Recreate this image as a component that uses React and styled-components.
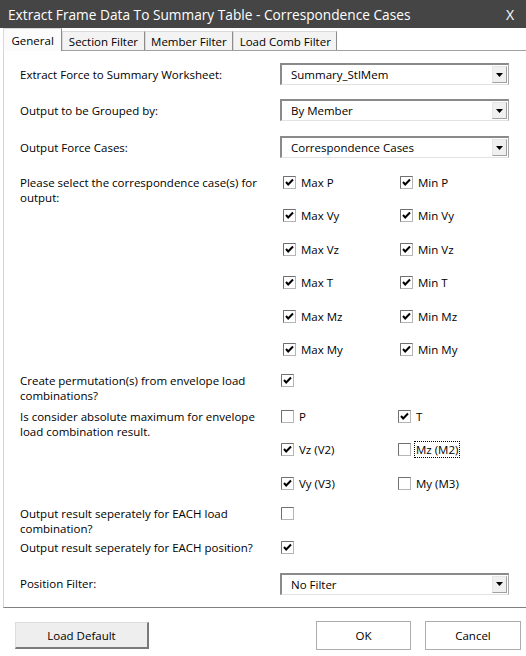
import React from 'react';
import styled, { createGlobalStyle } from 'styled-components';

const GlobalStyle = createGlobalStyle`
  html, body {
    margin: 0;
    padding: 0;
    background: #ffffff;
  }
  body {
    font-family: "Open Sans", "Noto Sans", sans-serif;
  }
`;

const S = {
  Window: styled.div`
    display: flex;
    flex-direction: column;
    width: 526px;
    height: 656px;
    overflow: hidden;
    background: #ffffff;
    color: #000;
    font-size: 11.5px;
  `,
  TitleBar: styled.div`
    display: flex;
    justify-content: space-between;
    align-items: center;
    height: 28px;
    padding: 0 12px 0 8px;
    background: #454545;
    color: #ffffff;
    font-size: 13.7px;
    flex-shrink: 0;
  `,
  Close: styled.span`
    font-size: 14px;
  `,
  TabStrip: styled.div`
    display: flex;
    align-items: flex-end;
    height: 22px;
    padding-left: 3px;
    flex-shrink: 0;
  `,
  Tab: styled.div`
    display: flex;
    align-items: center;
    height: ${({ $active }) => ($active ? '22px' : '18px')};
    margin-bottom: ${({ $active }) => ($active ? '-1px' : '0')};
    padding: 0 ${({ $active }) => ($active ? '7.5px' : '5.5px')};
    border: 1px solid #d9d9d9;
    border-bottom: none;
    border-right: 1px solid #8c8c8c;
    background: ${({ $active }) => ($active ? '#fbfbfb' : '#f3f3f3')};
    font-size: 11.5px;
    position: relative;
    z-index: ${({ $active }) => ($active ? 1 : 0)};
  `,
  Panel: styled.div`
    display: flex;
    flex-direction: column;
    height: 556px;
    margin-left: 3px;
    padding-left: 16px;
    border-top: 1px solid #a0a0a0;
    border-left: 1px solid #d4d4d4;
    border-bottom: 1px solid #808080;
    flex-shrink: 0;
  `,
  Row: styled.div`
    display: grid;
    grid-template-columns: 260px 229px;
    align-items: ${({ $top }) => ($top ? 'start' : 'center')};
    margin-top: ${({ $mt }) => $mt}px;
  `,
  Label: styled.div`
    line-height: 15px;
    padding-right: 6px;
  `,
  Select: styled.div`
    display: flex;
    align-items: center;
    justify-content: space-between;
    height: 22px;
    box-sizing: border-box;
    border-top: 2px solid #8a8a8a;
    border-left: 2px solid #8a8a8a;
    border-right: 1px solid #a8a8a8;
    border-bottom: 1px solid #e2e2e2;
    background: #ffffff;
    padding-left: 9px;
  `,
  Arrow: styled.div`
    display: flex;
    align-items: center;
    justify-content: center;
    width: 15px;
    height: 17px;
    margin-right: 1px;
    box-sizing: border-box;
    border: 1px solid #a0a0a0;
    border-top-color: #e6e6e6;
    border-left-color: #e6e6e6;
    background: #f0f0f0;
  `,
  CheckGrid: styled.div`
    display: grid;
    grid-template-columns: 117px 112px;
    row-gap: ${({ $gap }) => $gap}px;
    padding-left: ${({ $pad }) => $pad}px;
  `,
  Check: styled.div`
    display: flex;
    align-items: center;
    gap: 4px;
    height: 15px;
    padding-left: ${({ $pad }) => $pad || 0}px;
  `,
  CheckText: styled.span`
    padding: 0 1px;
    outline: ${({ $focus }) => ($focus ? '1px dotted #000' : 'none')};
    line-height: 15px;
  `,
  Footer: styled.div`
    display: flex;
    align-items: center;
    padding: 7px 5px 0 15px;
    flex: 1;
  `,
  Button: styled.div`
    display: flex;
    align-items: center;
    justify-content: center;
    box-sizing: border-box;
    width: ${({ $w }) => $w}px;
    height: ${({ $h }) => $h}px;
    margin-left: ${({ $ml }) => $ml || 0}px;
    background: ${({ $raised }) => ($raised ? '#eeeeee' : '#ffffff')};
    border: 1px solid ${({ $raised }) => ($raised ? '#dcdcdc' : '#adadad')};
    border-right: ${({ $raised }) => ($raised ? '2px solid #7a7a7a' : '1px solid #adadad')};
    border-bottom: ${({ $raised }) => ($raised ? '2px solid #7a7a7a' : '1px solid #adadad')};
    font-size: 11.5px;
  `,
};

const CheckBox = ({ checked }) => (
  <svg width="13" height="13" viewBox="0 0 13 13">
    <rect x="0.5" y="0.5" width="12" height="12" fill="#fff" stroke="#b5b5b5" />
    <path d="M0.5 12.5V0.5H12.5" fill="none" stroke="#707070" />
    {checked && (
      <polyline points="3,6 5.2,8.5 10,3.5" fill="none" stroke="#000" strokeWidth="2" />
    )}
  </svg>
);

const Check = ({ checked, label, focus, pad }) => (
  <S.Check $pad={pad}>
    <CheckBox checked={checked} />
    {label && <S.CheckText $focus={focus}>{label}</S.CheckText>}
  </S.Check>
);

const Select = ({ value }) => (
  <S.Select>
    <span>{value}</span>
    <S.Arrow>
      <svg width="7" height="4" viewBox="0 0 7 4">
        <polygon points="0,0 7,0 3.5,4" fill="#000" />
      </svg>
    </S.Arrow>
  </S.Select>
);

const cases = [
  ['Max P', 'Min P'],
  ['Max Vy', 'Min Vy'],
  ['Max Vz', 'Min Vz'],
  ['Max T', 'Min T'],
  ['Max Mz', 'Min Mz'],
  ['Max My', 'Min My'],
];

const App = () => (
  <>
    <GlobalStyle />
    <S.Window>
      <S.TitleBar>
        <span>Extract Frame Data To Summary Table - Correspondence Cases</span>
        <S.Close>X</S.Close>
      </S.TitleBar>
      <S.TabStrip>
        <S.Tab $active>General</S.Tab>
        <S.Tab>Section Filter</S.Tab>
        <S.Tab>Member Filter</S.Tab>
        <S.Tab>Load Comb Filter</S.Tab>
      </S.TabStrip>
      <S.Panel>
        <S.Row $mt={12}>
          <S.Label>Extract Force to Summary Worksheet:</S.Label>
          <Select value="Summary_StlMem" />
        </S.Row>
        <S.Row $mt={14}>
          <S.Label>Output to be Grouped by:</S.Label>
          <Select value="By Member" />
        </S.Row>
        <S.Row $mt={15}>
          <S.Label>Output Force Cases:</S.Label>
          <Select value="Correspondence Cases" />
        </S.Row>
        <S.Row $mt={17} $top>
          <S.Label>Please select the correspondence case(s) for output:</S.Label>
          <S.CheckGrid $gap={18.4} $pad={3}>
            {cases.flat().map((c) => (
              <Check key={c} checked label={c} />
            ))}
          </S.CheckGrid>
        </S.Row>
        <S.Row $mt={16} $top>
          <S.Label>Create permutation(s) from envelope load combinations?</S.Label>
          <Check checked pad={1} />
        </S.Row>
        <S.Row $mt={6} $top>
          <S.Label>Is consider absolute maximum for envelope load combination result.</S.Label>
          <S.CheckGrid $gap={18.5} $pad={1}>
            <Check label="P" />
            <Check checked label="T" />
            <Check checked label="Vz (V2)" />
            <Check label="Mz (M2)" focus />
            <Check checked label="Vy (V3)" />
            <Check label="My (M3)" />
          </S.CheckGrid>
        </S.Row>
        <S.Row $mt={15} $top>
          <S.Label>Output result seperately for EACH load combination?</S.Label>
          <Check pad={1} />
        </S.Row>
        <S.Row $mt={4} $top>
          <S.Label>Output result seperately for EACH position?</S.Label>
          <Check checked pad={1} />
        </S.Row>
        <S.Row $mt={18}>
          <S.Label>Position Filter:</S.Label>
          <Select value="No Filter" />
        </S.Row>
      </S.Panel>
      <S.Footer>
        <S.Button $raised $w={134} $h={27}>Load Default</S.Button>
        <S.Button $w={95} $h={29} $ml={167}>OK</S.Button>
        <S.Button $w={96} $h={29} $ml={14}>Cancel</S.Button>
      </S.Footer>
    </S.Window>
  </>
);

export default App;
